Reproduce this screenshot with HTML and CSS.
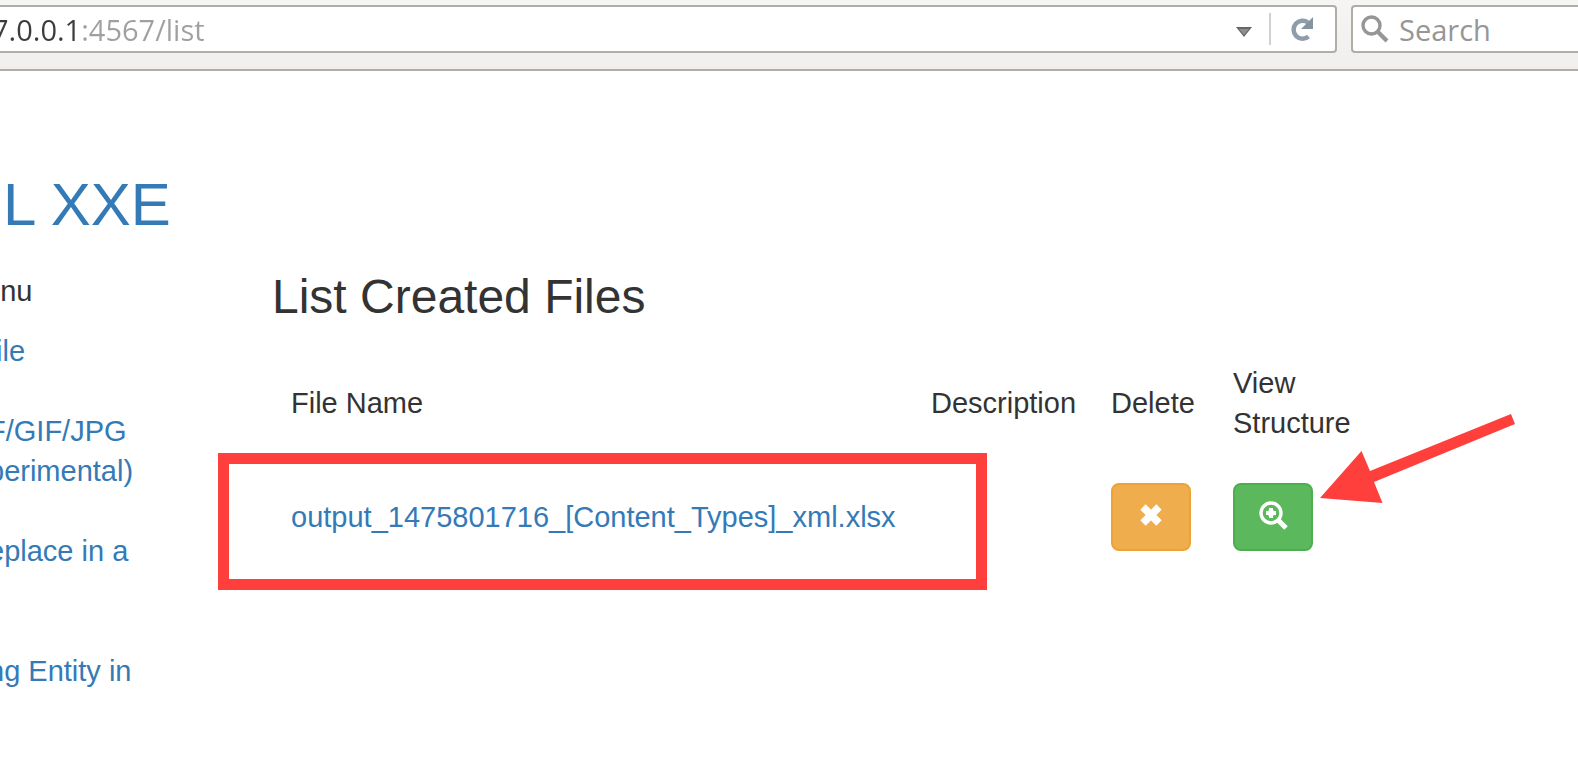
FILE: index.html
```html
<!DOCTYPE html>
<html lang="en">
<head>
<meta charset="utf-8">
<title>List Created Files</title>
<link rel="stylesheet" href="styles.css">
</head>
<body>
<header class="toolbar">
  <div class="field address">
    <input class="address-input" type="text" aria-label="Address" value="7.0.0.1:4567/list">
    <button class="tool" type="button" aria-label="History">
      <svg width="16" height="16" viewBox="0 0 16 16"><path d="M0 6h16L8 16z" fill="#666"/><path d="M3 8h10L8 14z" fill="#8f8f8f"/></svg>
    </button>
    <button class="tool reload" type="button" aria-label="Reload">
      <svg width="24" height="24" viewBox="0 0 24 24"><path d="M17.500 19.500A9 9 0 1 1 17 5.500" fill="none" stroke="#8f9dab" stroke-width="4.500"/><path d="M22 0v12H10z" fill="#8594a2"/></svg>
    </button>
  </div>
  <div class="field search">
    <svg width="28" height="28" viewBox="0 0 28 28" aria-hidden="true"><circle cx="10.500" cy="10.500" r="8.500" fill="none" stroke="#969696" stroke-width="3.400"/><path d="M17 17l9 9" stroke="#969696" stroke-width="4.200"/></svg>
    <input class="search-input" type="search" aria-label="Search" placeholder="Search">
  </div>
</header>
<div class="page">
  <h1 class="brand"><a href="#">L XXE</a></h1>
  <div class="columns">
    <nav class="menu" aria-label="Menu">
      <p class="menu-title">enu</p>
      <ul class="menu-list">
        <li><a href="#">file</a></li>
        <li><a href="#">F/GIF/JPG</a><a href="#">perimental)</a></li>
        <li class="tall"><a href="#">eplace in a</a></li>
        <li><a href="#">ng Entity in</a></li>
      </ul>
    </nav>
    <main class="content">
      <h2 class="heading">List Created Files</h2>
      <table class="files">
        <colgroup><col class="col-name"><col class="col-description"><col class="col-delete"><col class="col-view"></colgroup>
        <thead>
          <tr><th>File Name</th><th>Description</th><th>Delete</th><th>View<br>Structure</th></tr>
        </thead>
        <tbody>
          <tr>
            <td class="marked"><a href="#">output_1475801716_[Content_Types]_xml.xlsx</a></td>
            <td></td>
            <td>
              <button class="btn btn-delete" type="button" aria-label="Delete">
                <svg width="24" height="28" viewBox="0 0 24 28"><path d="M4 4l16 16M20 4L4 20" stroke="#fff" stroke-width="7.500"/></svg>
              </button>
            </td>
            <td class="pointed">
              <button class="btn btn-view" type="button" aria-label="View structure">
                <svg width="30" height="32" viewBox="0 0 30 32"><circle cx="13" cy="12" r="10" fill="none" stroke="#fff" stroke-width="3.400"/><path d="M11 7h4v2l1 1h2v4h-2l-1 1v2h-4v-2l-1-1H8v-4h2l1-1z" fill="#fff"/><path d="M20 19l8 8" stroke="#fff" stroke-width="5"/></svg>
              </button>
              <svg class="arrow" width="196" height="92" viewBox="0 0 196 92" aria-hidden="true"><path d="M0 85L41.500 38L50 58L191 1L195 11L54 69L62.500 90z" fill="#ff3f3b"/></svg>
            </td>
          </tr>
        </tbody>
      </table>
    </main>
  </div>
</div>
</body>
</html>
```
FILE: styles.css
```css
* { box-sizing: border-box; }

body {
  margin: 0;
  background: #fff;
  color: #333;
  font: 29px/40px "Liberation Sans", Arial, sans-serif;
  overflow-x: hidden;
}

a { color: #337ab7; text-decoration: none; }
a:hover { text-decoration: underline; }

button, input { font: inherit; margin: 0; padding: 0; border: 0; background: none; }

.toolbar {
  display: flex;
  gap: 14px;
  height: 71px;
  padding-top: 5px;
  background: linear-gradient(#f5f5f3, #f0efed);
  border-bottom: 2px solid #b2aca7;
  font-family: "Open Sans", "Noto Sans", sans-serif;
  overflow: hidden;
}

.field {
  display: flex;
  align-items: center;
  height: 48px;
  background: #fff;
  border: 2px solid #b2aca7;
}

.address { flex: 1; border-left: 0; border-radius: 0 4px 4px 0; }

.address-input {
  flex: 1;
  min-width: 0;
  margin-left: -8px;
  padding-top: 2px;
  color: transparent;
  background: linear-gradient(to right, #3c3c3c 87px, #a0a0a0 87px);
  background-clip: text;
}

.tool { display: flex; justify-content: center; align-items: center; width: 51px; height: 32px; }
.reload { width: 66px; border-left: 2px solid #d0d0d0; }

.search { width: 227px; padding-left: 8px; gap: 10px; border-right: 0; border-radius: 4px 0 0 4px; }
.search-input { flex: 1; min-width: 0; padding-top: 2px; }
.search-input::placeholder { color: #969696; opacity: 1; }

.page { padding-top: 98px; }

.brand { margin: 0; padding-left: 3px; font-size: 60px; font-weight: 400; line-height: 72px; }

.columns { display: flex; padding-top: 30px; }

.menu { width: 272px; overflow: hidden; text-indent: -12px; }
.menu-title { margin: 0 0 20px; text-indent: -16px; }
.menu-list { margin: 0; padding: 0; list-style: none; }
.menu-list li { margin-bottom: 40px; }
.menu-list .tall { margin-bottom: 80px; }
.menu-list a { display: block; }

.content { flex: 1; }

.heading { margin: 0; font-size: 48px; font-weight: 400; line-height: 52px; }

.files { width: 1078px; margin-top: 20px; border-collapse: collapse; table-layout: fixed; }
.files th, .files td { padding: 20px 0 20px 19px; font-weight: 400; text-align: left; white-space: nowrap; }
.col-name { width: 640px; }
.col-description { width: 180px; }
.col-delete { width: 122px; }

.marked, .pointed { position: relative; }
.marked::after {
  content: "";
  position: absolute;
  inset: -10px -75px -19px -54px;
  border: 11px solid #ff3f3b;
  pointer-events: none;
}

.arrow { position: absolute; left: 106px; top: -50px; pointer-events: none; }

.btn {
  display: flex;
  justify-content: center;
  align-items: center;
  width: 80px;
  height: 68px;
  border: 2px solid;
  border-radius: 8px;
}
.btn-delete { background: #f0ad4e; border-color: #eea236; }
.btn-view { background: #5cb85c; border-color: #4cae4c; }
```
